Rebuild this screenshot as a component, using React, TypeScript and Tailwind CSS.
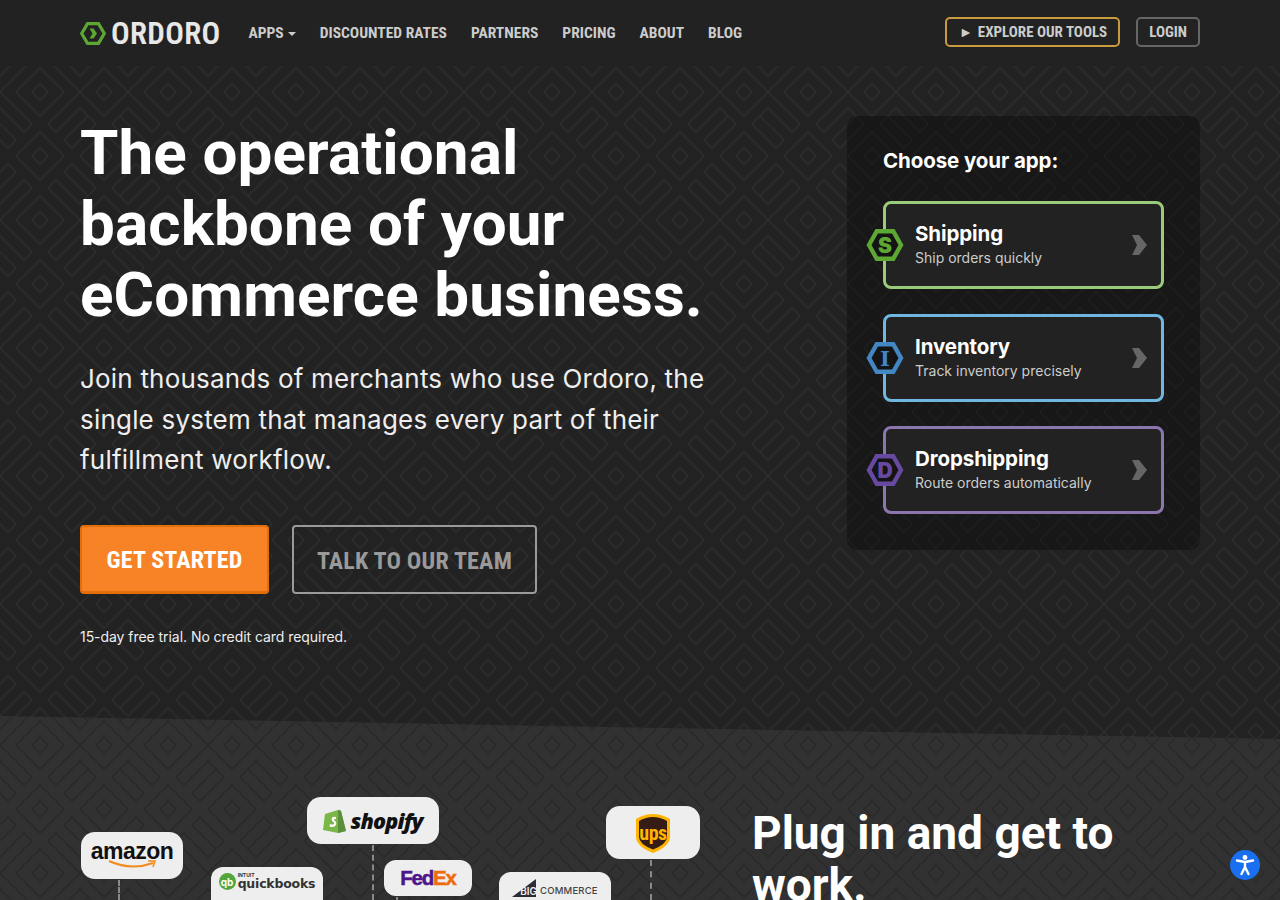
import React from "react";

const navLinks = ["DISCOUNTED RATES", "PARTNERS", "PRICING", "ABOUT", "BLOG"];

const apps = [
  { name: "Shipping", sub: "Ship orders quickly", letter: "S", border: "border-[#9acb78]", hex: "#5da832" },
  { name: "Inventory", sub: "Track inventory precisely", letter: "I", border: "border-[#6fb7e0]", hex: "#4287c4" },
  { name: "Dropshipping", sub: "Route orders automatically", letter: "D", border: "border-[#8c76b0]", hex: "#67499f" },
];

// one figure of the background weave, wrapped round a 128px tile
const weave = [
  "M8 32 L32 8 L56 32 L32 56 Z",
  "M24 32 L32 24 L40 32 L32 40 Z",
  "M72 32 L96 8 L120 32 L96 56 Z M88 32 L96 24 L104 32 L96 40 Z",
  "M8 96 L32 72 L56 96 L32 120 Z M24 96 L32 88 L40 96 L32 104 Z",
  "M72 96 L96 72 L120 96 L96 120 Z M88 96 L96 88 L104 96 L96 104 Z",
  "M32 56 L88 0 L80 -8 L56 16 L40 0 L64 -24 L72 -16 L48 8",
  "M32 56 L-24 0 L-16 -8 L8 16 L24 0 L0 -24 L-8 -16 L16 8",
  "M32 8 L88 64 L80 72 L56 48 L40 64 L64 88 L72 80 L48 56",
  "M32 8 L-24 64 L-16 72 L8 48 L24 64 L0 88 L-8 80 L16 56",
].join(" ");

const Weave = ({ id, stroke, y }: { id: string; stroke: string; y: number }) => (
  <svg className="absolute inset-0 h-full w-full" aria-hidden="true">
    <defs>
      <pattern id={id} x="72" y={y} width="128" height="128" patternUnits="userSpaceOnUse">
        {[0, 128].map((dx) =>
          [0, 128].map((dy) => (
            <path
              key={`${dx}-${dy}`}
              d={weave}
              transform={`translate(${dx} ${dy})`}
              fill="none"
              stroke={stroke}
              strokeWidth="1.6"
            />
          ))
        )}
      </pattern>
    </defs>
    <rect width="100%" height="100%" fill={`url(#${id})`} />
  </svg>
);

const AppHex = ({ color, letter }: { color: string; letter: string }) => (
  <svg width="38" height="34" viewBox="0 0 38 34" className="absolute -left-[20px] top-1/2 -translate-y-1/2">
    <polygon points="0.5,17 9.5,1 28.5,1 37.5,17 28.5,33 9.5,33" fill={color} />
    <polygon points="5.5,17 12,5.5 26,5.5 32.5,17 26,28.5 12,28.5" fill="#141414" />
    <text
      x="19"
      y="24.5"
      textAnchor="middle"
      fontSize="21"
      fontWeight="900"
      fontFamily={letter === "I" ? "DejaVu Serif, serif" : "Inter, sans-serif"}
      fill={color}
    >
      {letter}
    </text>
  </svg>
);

const Chevron = () => (
  <svg width="15" height="20" viewBox="0 0 15 20" className="shrink-0">
    <polygon points="0,0 7,0 15,10 7,20 0,20 5,10" fill="#666666" />
  </svg>
);

const Dash = ({ className }: { className: string }) => (
  <div className={`absolute w-0 border-l-2 border-dashed border-[#8a8a8a] ${className}`} />
);

export default function App() {
  return (
    <div className="relative h-[900px] w-[1280px] overflow-hidden bg-[#222222] [font-family:Inter,sans-serif] text-white">
      <header className="relative z-20 h-[66px] bg-[#222222] px-20">
        <div className="flex h-full items-center [font-family:'Roboto_Condensed',Roboto,sans-serif] font-bold">
          <a className="flex items-center gap-[5px]">
            <svg width="26" height="23" viewBox="0 0 26 23">
              <polygon points="1.7,11.5 7.5,1.7 18.5,1.7 24.3,11.5 18.5,21.3 7.5,21.3" fill="none" stroke="#5da832" strokeWidth="3.2" />
              <polygon points="9.5,6.5 13.5,6.5 17,11.5 13.5,16.5 9.5,16.5 12.5,11.5" fill="#5da832" />
            </svg>
            <span className="pt-[2px] text-[31px] font-semibold tracking-[0.3px] text-[#e8e8e8]">ORDORO</span>
          </a>
          <nav className="ml-[28px] flex items-center gap-6 pt-[2px] text-[15.5px] text-[#cccccc]">
            <span className="flex items-center gap-1">
              APPS
              <span className="h-0 w-0 border-x-[4px] border-t-[4px] border-x-transparent border-t-[#cccccc]" />
            </span>
            {navLinks.map((l) => (
              <span key={l}>{l}</span>
            ))}
          </nav>
          <div className="ml-auto -mt-[2px] flex items-center gap-4 text-[15px] text-[#cccccc]">
            <span className="flex h-[30px] items-center rounded-[5px] border-2 border-[#c99a3d] pl-[12px] pr-[11px]">
              <span className="mr-[5px] text-[14px]">►</span> EXPLORE OUR TOOLS
            </span>
            <span className="flex h-[30px] items-center rounded-[5px] border-2 border-[#666666] px-[11px]">LOGIN</span>
          </div>
        </div>
      </header>

      <section className="relative h-[674px] px-20">
        <Weave id="hero" stroke="#2b2b2b" y={-6} />
        <div className="relative flex items-start justify-between">
          <div className="w-[660px] pt-[51px]">
            <h1 className="whitespace-nowrap [font-family:Roboto,sans-serif] text-[62px] font-bold leading-[71px] tracking-[0.1px]">
              The operational
              <br />
              backbone of your
              <br />
              eCommerce business.
            </h1>
            <p className="mt-[29px] w-[640px] text-[26px] leading-[40.5px] tracking-[0.2px] text-[#eeeeee]">
              Join thousands of merchants who use Ordoro, the single system that manages every part of their fulfillment workflow.
            </p>
            <div className="mt-[44px] flex gap-[23px] [font-family:'Roboto_Condensed',Roboto,sans-serif] text-[24px] font-bold tracking-[0.2px]">
              <a className="flex h-[69px] w-[189px] items-center justify-center rounded-[4px] border-2 border-b-[3px] border-[#e46f0a] bg-[#f78326] pt-[3px]">
                GET STARTED
              </a>
              <a className="flex h-[69px] w-[245px] items-center justify-center rounded-[4px] border-2 border-[#9a9a9a] pt-[3px] text-[#9a9a9a]">
                TALK TO OUR TEAM
              </a>
            </div>
            <p className="mt-[32px] text-[14px] tracking-[-0.05px] text-[#eeeeee]">15-day free trial. No credit card required.</p>
          </div>

          <aside className="mt-[50px] h-[434px] w-[353px] rounded-[10px] bg-black/30 pl-[36px] pr-[36px] pt-[31px]">
            <h2 className="text-[20.5px] font-bold leading-[28px] tracking-[-0.1px]">Choose your app:</h2>
            <div className="mt-[26px] flex flex-col gap-[24.5px]">
              {apps.map((a) => (
                <a key={a.name} className={`relative flex h-[88px] items-center justify-between rounded-[8px] border-[3px] bg-[#222222] pl-[29px] pr-[14px] ${a.border}`}>
                  <AppHex color={a.hex} letter={a.letter} />
                  <div className="pb-[2px]">
                    <div className="text-[20.5px] font-bold leading-[28px] tracking-[-0.1px]">{a.name}</div>
                    <div className="text-[14px] leading-[20px] text-[#cccccc]">{a.sub}</div>
                  </div>
                  <Chevron />
                </a>
              ))}
            </div>
          </aside>
        </div>
      </section>

      <section className="relative z-10 -mt-[24px] h-[184px] bg-[#313131] px-20 [clip-path:polygon(0_0,100%_23px,100%_100%,0_100%)]">
        <Weave id="lower" stroke="#292929" y={-3} />
        <div className="relative flex h-full">
          <div className="relative w-[672px] shrink-0">
            {/* integration nodes, placed freely */}
            <div className="absolute left-[1px] top-[116px] flex h-[47px] w-[102px] flex-col items-center justify-center rounded-[14px] bg-[#eeeeee] pb-[2px]">
              <span className="[font-family:'Liberation_Sans',sans-serif] text-[23px] font-bold leading-[22px] tracking-[-0.5px] text-[#111111]">amazon</span>
              <svg width="50" height="9" viewBox="0 0 50 9" className="-mt-[2px]">
                <path d="M2 1 Q24 11 46 3" fill="none" stroke="#f08c1e" strokeWidth="2" />
                <path d="M41 1 L48 1 L46 7" fill="none" stroke="#f08c1e" strokeWidth="1.6" />
              </svg>
            </div>
            <Dash className="left-[38px] top-[164px] h-[20px]" />

            <div className="absolute left-[131px] top-[151px] flex h-[46px] w-[112px] items-start justify-center gap-[2px] rounded-[12px] bg-[#eeeeee] pt-[5px]">
              <span className="mt-[1px] flex h-[17px] w-[17px] items-center justify-center rounded-full bg-[#53a63c] text-[10px] font-bold leading-none text-white">qb</span>
              <span className="flex flex-col items-start">
                <span className="text-[5px] font-bold leading-[6px] text-[#333333]">INTUIT</span>
                <span className="[font-family:'DejaVu_Sans',sans-serif] text-[12.5px] font-semibold leading-[12px] tracking-[-0.2px] text-[#333333]">quickbooks</span>
              </span>
            </div>

            <div className="absolute left-[227px] top-[81px] flex h-[47px] w-[132px] items-center justify-center gap-[3px] rounded-[14px] bg-[#eeeeee]">
              <svg width="24" height="27" viewBox="0 0 24 27">
                <path d="M2 7 L15 3 Q17 2 18 4 L23 24 L15 26 L0 23 Z" fill="#7ab648" />
                <path d="M15 3 L18 4 L23 24 L15 26 Z" fill="#5c8e3e" />
                <path d="M13 10 Q9 9 8.5 12 Q8.5 14 11 15.5 Q12 17 10 17.5 Q8 17.5 7 17 L6.5 19.5 Q11 21 13 18 Q14 15 11 13 Q10.5 11.5 13 12 Z" fill="#ffffff" />
              </svg>
              <span className="[font-family:'Open_Sans',sans-serif] text-[21.5px] font-extrabold italic leading-none tracking-[-0.8px] text-[#111111]">shopify</span>
            </div>
            <Dash className="left-[292px] top-[129px] h-[55px]" />

            <div className="absolute left-[304px] top-[144px] flex h-[36px] w-[88px] items-center justify-center rounded-[12px] bg-[#eeeeee] [font-family:'Liberation_Sans',sans-serif] text-[20.5px] font-bold tracking-[-1.2px] [-webkit-text-stroke:0.5px]">
              <span className="text-[#4d148c]">Fed</span>
              <span className="text-[#ef6c0c]">Ex</span>
            </div>
            <Dash className="left-[316px] top-[181px] h-[3px]" />

            <div className="absolute left-[419px] top-[156px] flex h-[40px] w-[112px] items-center justify-center rounded-[12px] bg-[#eeeeee] pb-[2px]">
              <div className="relative flex items-end">
                <svg width="24" height="18" viewBox="0 0 24 18" className="absolute bottom-0 left-0">
                  <polygon points="0,18 24,0 24,18" fill="#2c2c35" />
                </svg>
                <span className="relative pl-[8px] text-[10px] font-semibold leading-[12px] text-[#eeeeee]">BIG</span>
                <span className="relative pl-[3px] text-[9.5px] font-medium leading-[12px] tracking-[0.2px] text-[#444444]">COMMERCE</span>
              </div>
            </div>

            <div className="absolute left-[526px] top-[90px] flex h-[53px] w-[94px] items-center justify-center rounded-[14px] bg-[#eeeeee]">
              <div className="relative flex h-[40px] w-[34px] items-center justify-center">
                <svg width="34" height="40" viewBox="0 0 34 40" className="absolute inset-0">
                  <path d="M0 6 Q17 -4 34 6 L34 24 Q34 33 17 40 Q0 33 0 24 Z" fill="#ffb500" />
                  <path d="M3 8 Q17 0 31 8 L31 24 Q31 31 17 36.5 Q3 31 3 24 Z" fill="#351c15" />
                </svg>
                <span className="relative [font-family:'Roboto_Condensed',sans-serif] text-[20px] font-bold leading-none tracking-[-0.5px] text-[#ffb500]">ups</span>
              </div>
            </div>
            <Dash className="left-[570px] top-[144px] h-[40px]" />
          </div>
          <h2 className="pt-[91px] [font-family:Roboto,sans-serif] text-[46px] font-bold leading-[52px]">Plug in and get to work.</h2>
        </div>
      </section>

      <div className="absolute left-[1230px] top-[850px] z-30 flex h-[30px] w-[30px] items-center justify-center rounded-full bg-[#1a6fef]">
        <svg width="20" height="22" viewBox="0 0 20 22">
          <circle cx="10" cy="3.5" r="2.4" fill="#ffffff" />
          <path d="M2 6.5 L10 8 L18 6.5 M10 8 L10 13 M10 13 L6.5 20 M10 13 L13.5 20" fill="none" stroke="#ffffff" strokeWidth="2.4" strokeLinecap="round" strokeLinejoin="round" />
        </svg>
      </div>
    </div>
  );
}
